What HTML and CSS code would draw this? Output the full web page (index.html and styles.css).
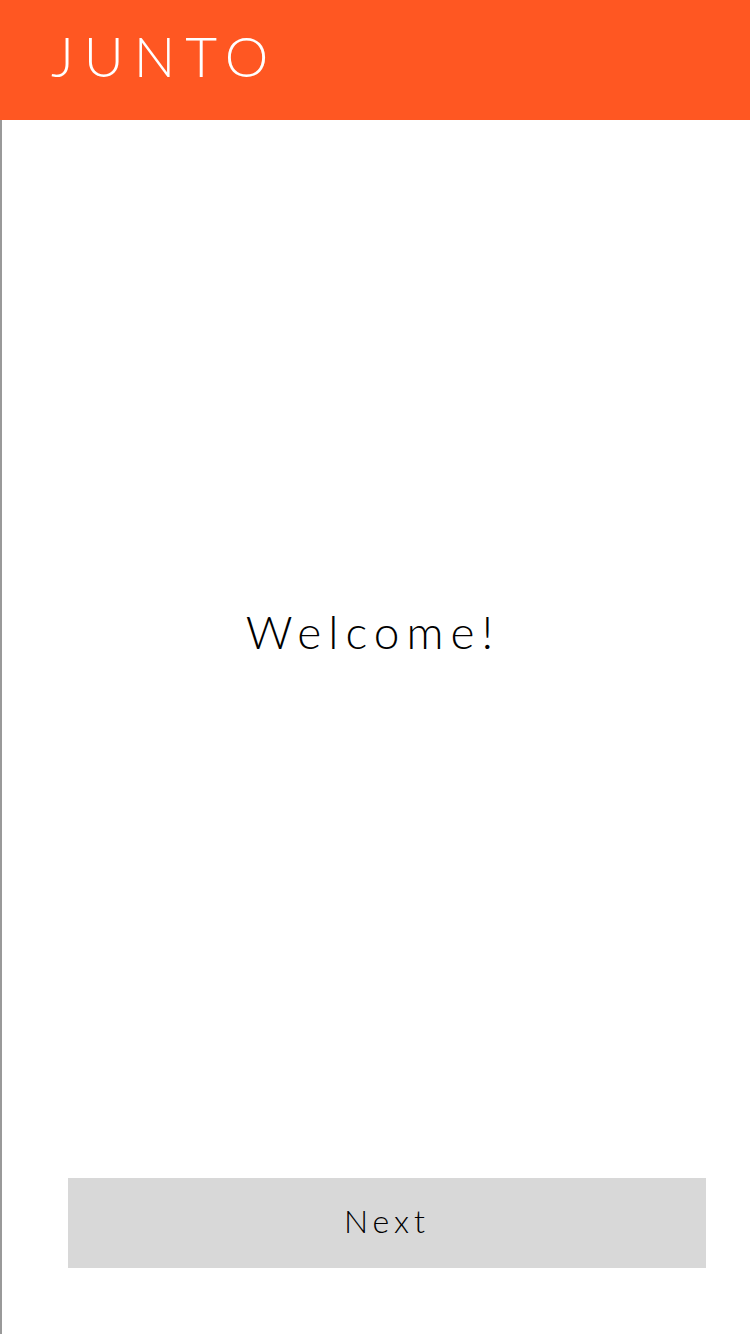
FILE: index.html
```html
<!DOCTYPE html>
<html>
<head>
<meta charset="utf-8">
<link rel="stylesheet" href="styles.css">
</head>
<body>
<div class="app">
  <header class="topbar"><span class="brand">JUNTO</span></header>
  <main class="content">
    <div class="welcome">Welcome!</div>
    <div class="actions"><button class="next">Next</button></div>
  </main>
</div>
</body>
</html>
```
FILE: styles.css
```css
html, body { margin: 0; padding: 0; background: #fff; }
body { font-family: "Lato", "Open Sans", sans-serif; }
.app { width: 750px; height: 1334px; display: flex; flex-direction: column; }
.topbar {
  height: 120px; background: #ff5722; display: flex; align-items: center;
  padding-left: 51px; padding-bottom: 8px; box-sizing: border-box;
}
.brand { color: #fff; font-size: 55px; font-weight: 300; letter-spacing: 10px; line-height: 1; }
.content {
  flex: 1; border-left: 2px solid #999; display: flex; flex-direction: column;
  box-sizing: border-box;
}
.welcome {
  flex: 1; display: flex; align-items: center; justify-content: center;
  font-size: 46px; font-weight: 300; letter-spacing: 7px; color: #000;
  padding-bottom: 36px; padding-right: 6px;
}
.actions { padding: 0 44px 66px 66px; }
.next {
  width: 638px; height: 90px; background: #d8d8d8; border: 0; display: block;
  padding: 0 0 6px 0;
  font-family: "Lato", sans-serif; font-size: 32px; font-weight: 300; letter-spacing: 5px; color: #000;
}
```
